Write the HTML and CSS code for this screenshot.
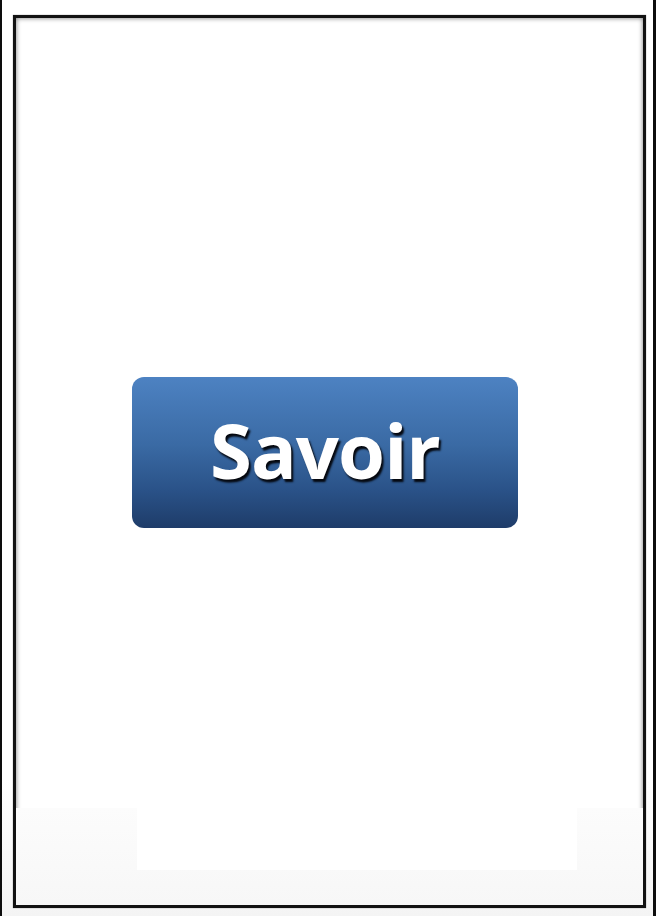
FILE: index.html
```html
<!DOCTYPE html>
<html lang="fr">
<head>
<meta charset="utf-8">
<title>Savoir</title>
<link rel="stylesheet" href="styles.css">
</head>
<body>
<div class="page">
  <div class="frame">
    <div class="stage">
      <button class="btn" type="button">Savoir</button>
    </div>
    <div class="footer">
      <div class="footer-box"></div>
    </div>
  </div>
</div>
</body>
</html>
```

FILE: styles.css
```css
html, body {
  margin: 0;
  padding: 0;
  width: 656px;
  height: 916px;
  overflow: hidden;
}

.page {
  box-sizing: border-box;
  width: 656px;
  height: 916px;
  border-left: 2px solid #0d0d0d;
  border-right: 3px solid #0d0d0d;
  background: linear-gradient(to bottom, #ffffff 0%, #ffffff 85%, #f4f4f4 100%);
  padding: 15px 7px 8px 11px;
}

.frame {
  box-sizing: border-box;
  width: 633px;
  height: 893px;
  border: 3px solid #121212;
  background: #ffffff;
  box-shadow: inset 0 0 5px rgba(0, 0, 0, 0.55), 0 0 1px rgba(0, 0, 0, 0.5);
  display: flex;
  flex-direction: column;
}

.stage {
  padding: 359px 0 0 116px;
}

.btn {
  display: flex;
  align-items: center;
  justify-content: center;
  width: 386px;
  height: 151px;
  padding: 0 0 6px 0;
  border: none;
  border-radius: 12px;
  background: linear-gradient(to bottom, #4d82c2 0%, #3a6aa4 45%, #2a5288 75%, #1e3c69 100%);
  color: #ffffff;
  font-family: "Open Sans", "DejaVu Sans", sans-serif;
  font-weight: 700;
  font-size: 76px;
  letter-spacing: -1px;
  text-shadow: 2px 3px 2px #05080f;
  cursor: pointer;
}

.footer {
  margin-top: auto;
  height: 97px;
  background: linear-gradient(to bottom, #fcfcfc, #f7f7f7);
  padding-left: 121px;
}

.footer-box {
  width: 440px;
  height: 62px;
  background: #ffffff;
}
```
